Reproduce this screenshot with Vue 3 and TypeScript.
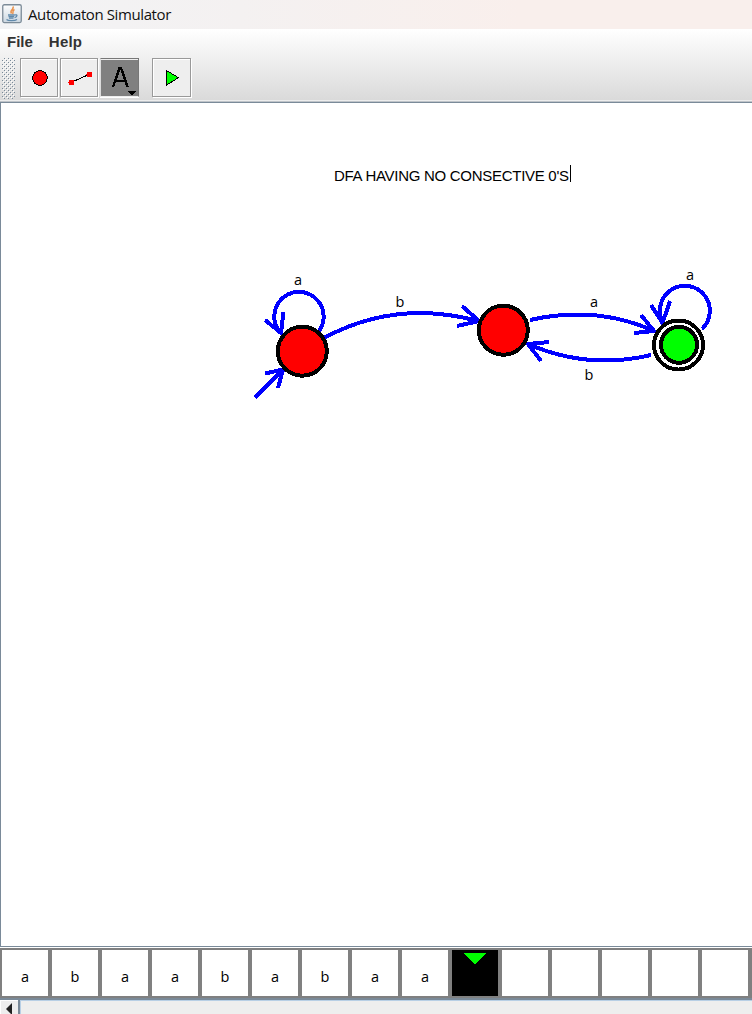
<script setup lang="ts">
interface Label { text: string; x: number; y: number }

const menus: string[] = ['File', 'Help']
const labels: Label[] = [
  { text: 'a', x: 298, y: 182 },
  { text: 'b', x: 400, y: 204 },
  { text: 'a', x: 594, y: 204 },
  { text: 'b', x: 589, y: 277 },
  { text: 'a', x: 690, y: 177 },
]
const edges: string[] = [
  // self loop on the start state
  'M319 228 A24.700 24.700 0 1 0 280.500 230',
  'M265 217 L281 230 L283.500 209',
  // entry arrow
  'M255 294.500 L283 266.500 M265 270.500 L283 266.500 L278 285',
  // start to middle
  'M324 235 Q396 196 478 218',
  'M462 203 L479 218 L457 223',
  // middle to final
  'M530 217 Q596 202 654 228',
  'M641 212 L654 228 L634 230',
  // final to middle
  'M651 252 Q588 267 528 241',
  'M549 239 L528 241 L541 258',
  // self loop on the final state
  'M702 226 A25 25 0 1 0 662.500 219',
  'M651 202 L662.500 220 L670 198',
]
const tape: string[] = ['a', 'b', 'a', 'a', 'b', 'a', 'b', 'a', 'a', '', '', '', '', '', '', '']
const head = 9
</script>

<template>
  <div class="window">
    <header class="titlebar">
      <svg class="java" width="20" height="20" viewBox="0 0 20 20">
        <defs>
          <linearGradient id="frame" x1="0" y1="0" x2="0" y2="1">
            <stop offset="0" stop-color="#fdfdfd" /><stop offset="1" stop-color="#cbd7e1" />
          </linearGradient>
        </defs>
        <rect x=".75" y=".75" width="18.500" height="17.800" rx="1.500" fill="url(#frame)" stroke="#7c8b98" stroke-width="1.300" />
        <path d="M10.800 2.500 C13 5 7 6 9.500 9.500 M12.500 5.500 C9.500 7 12 8 10.500 10" fill="none" stroke="#e9934f" stroke-width="1.500" />
        <path d="M6 11 H12.500 M6.500 12.700 H12 M7 14.200 H11.500 M12.500 11 C16 10 15.500 13 12.500 13.500 M4.500 15.500 C6 17 13 17 15 15.500" fill="none" stroke="#6089ab" stroke-width="1.300" />
      </svg>
      <span class="title">Automaton Simulator</span>
    </header>

    <div class="chrome">
      <nav class="menubar"><span v-for="m in menus" :key="m">{{ m }}</span></nav>
      <div class="toolbar">
        <svg class="grip" width="13" height="41" shape-rendering="crispEdges">
          <defs>
            <pattern id="dots" width="4" height="4" patternUnits="userSpaceOnUse">
              <rect x="2" width="1" height="1" fill="#7a8a99" /><rect y="2" width="1" height="1" fill="#7a8a99" />
              <rect x="3" y="1" width="1" height="1" fill="#fff" /><rect x="1" y="3" width="1" height="1" fill="#fff" />
            </pattern>
          </defs>
          <rect width="13" height="41" fill="url(#dots)" />
        </svg>
        <button class="tool">
          <svg width="36" height="36" shape-rendering="crispEdges">
            <circle cx="19" cy="19" r="7.300" fill="#f00" stroke="#000" />
          </svg>
        </button>
        <button class="tool">
          <svg width="36" height="36" shape-rendering="crispEdges">
            <path d="M10 23.500 L28 15.500" stroke="#000" />
            <circle cx="10.500" cy="23.500" r="3" fill="#f00" /><circle cx="28.500" cy="15.500" r="3" fill="#f00" />
          </svg>
        </button>
        <button class="tool pressed">
          <svg width="38" height="38" shape-rendering="crispEdges">
            <path d="M13 29 L19.500 10 H21 L27.500 29 M15.500 23 H25.500" fill="none" stroke="#000" stroke-width="2.500" />
            <path d="M27 33 H36 L31.500 37.500 Z" fill="#000" />
          </svg>
        </button>
        <button class="tool run">
          <svg width="36" height="36" shape-rendering="crispEdges">
            <path d="M13.500 11.500 V26 L25.500 18.700 Z" fill="#0f0" stroke="#000" />
          </svg>
        </button>
      </div>
    </div>

    <main class="canvas">
      <svg width="751" height="843" viewBox="1 0 751 843">
        <text class="note" x="334" y="78" textLength="235" lengthAdjust="spacing">DFA HAVING NO CONSECTIVE 0'S</text>
        <path d="M570.500 62 V79" stroke="#000" shape-rendering="crispEdges" />
        <g shape-rendering="crispEdges">
          <path v-for="d in edges" :key="d" :d="d" class="edge" />
          <g stroke="#000" stroke-width="4">
            <circle cx="302.300" cy="248.200" r="24.500" fill="#f00" />
            <circle cx="503.300" cy="227.200" r="24.500" fill="#f00" />
            <circle cx="678.500" cy="242" r="24.500" fill="#fff" />
            <circle cx="679" cy="241.800" r="18" fill="#0f0" />
          </g>
        </g>
        <text v-for="(l, i) in labels" :key="i" class="label" :x="l.x" :y="l.y">{{ l.text }}</text>
      </svg>
    </main>

    <section class="tape">
      <div v-for="(c, i) in tape" :key="i" class="cell" :class="{ head: i === head }">
        <svg v-if="i === head" width="22" height="12" shape-rendering="crispEdges"><path d="M0 0 H22 L11 11.500 Z" fill="#0f0" /></svg>
        <span v-else>{{ c }}</span>
      </div>
    </section>

    <footer class="scrollbar">
      <div class="arrow"><svg width="6" height="12"><path d="M6 0 V12 L0 6 Z" fill="#222" /></svg></div>
      <div class="thumb"></div>
    </footer>
  </div>
</template>

<style>
body { margin: 0; overflow: hidden; }
</style>

<style scoped>
.window { width: 752px; height: 1014px; overflow: hidden; display: flex; flex-direction: column; background: #fff; font-family: "Liberation Sans", Arial, sans-serif; }
.titlebar { height: 29px; flex: none; display: flex; align-items: flex-start; background: linear-gradient(90deg, #f2f3f5 0, #f4f1f1 240px, #f9efec 520px, #f9efec 100%); }
.java { margin: 4px 0 0 2px; flex: none; }
.title { margin-left: 6px; font: 15px/29px "Open Sans", sans-serif; letter-spacing: -.4px; color: #111; white-space: nowrap; }
.chrome { height: 71px; flex: none; background: linear-gradient(#fff, #dadada); border-bottom: 1px solid #ededed; box-shadow: 0 1px #bfc4c9; margin-bottom: 1px; }
.menubar { height: 27px; display: flex; gap: 16px; padding-left: 7px; font-weight: bold; font-size: 15px; line-height: 26px; color: #333; }
.menubar span:last-child { letter-spacing: .2px; }
.toolbar { display: flex; padding: 2px 0 0 2px; }
.grip { flex: none; margin-right: 5px; }
.tool { box-sizing: border-box; width: 38px; height: 39px; padding: 0; margin: 0 2px 0 0; border: 1px solid #999; background: #eee; box-shadow: inset 1px 1px #fff, 1px 1px #fff; display: flex; align-items: flex-start; }
.tool svg { display: block; flex: none; }
.tool.pressed { width: 39px; background: #808080; box-shadow: inset 0 1px #eee, 0 1px #fff; border-color: #777 #777 #eee #ddd; }
.tool.pressed svg { margin: -1px; }
.tool.run { margin-left: 11px; width: 39px; }
.canvas { height: 843px; flex: none; border: solid #7a8a99; border-width: 1px 0 1px 1px; }
.canvas svg { display: block; }
.note { font-size: 15px; fill: #000; }
.edge { fill: none; stroke: #00f; stroke-width: 4; }
.label { font: 14.5px "Open Sans", sans-serif; text-anchor: middle; fill: #000; }
.tape { height: 46px; flex: none; display: flex; gap: 4px; margin-top: 1px; padding: 2px 0 2px 2px; background: #808080; }
.cell { width: 46px; height: 46px; flex: none; background: #fff; display: flex; justify-content: center; font: 14.5px/54px "Open Sans", sans-serif; color: #000; }
.cell.head { background: #000; }
.cell.head svg { margin-top: 3px; }
.scrollbar { flex: 1; display: flex; border-top: 2px solid #7a8a99; background: #eee; }
.arrow { width: 18px; padding-top: 3px; box-sizing: border-box; box-shadow: inset 1px 1px #fff; display: flex; justify-content: center; }
.thumb { flex: 1; border: solid #b8cfe5; border-width: 1px 0 0 1px; box-shadow: -2px 0 #7a8a99; margin-left: 2px; }
</style>
